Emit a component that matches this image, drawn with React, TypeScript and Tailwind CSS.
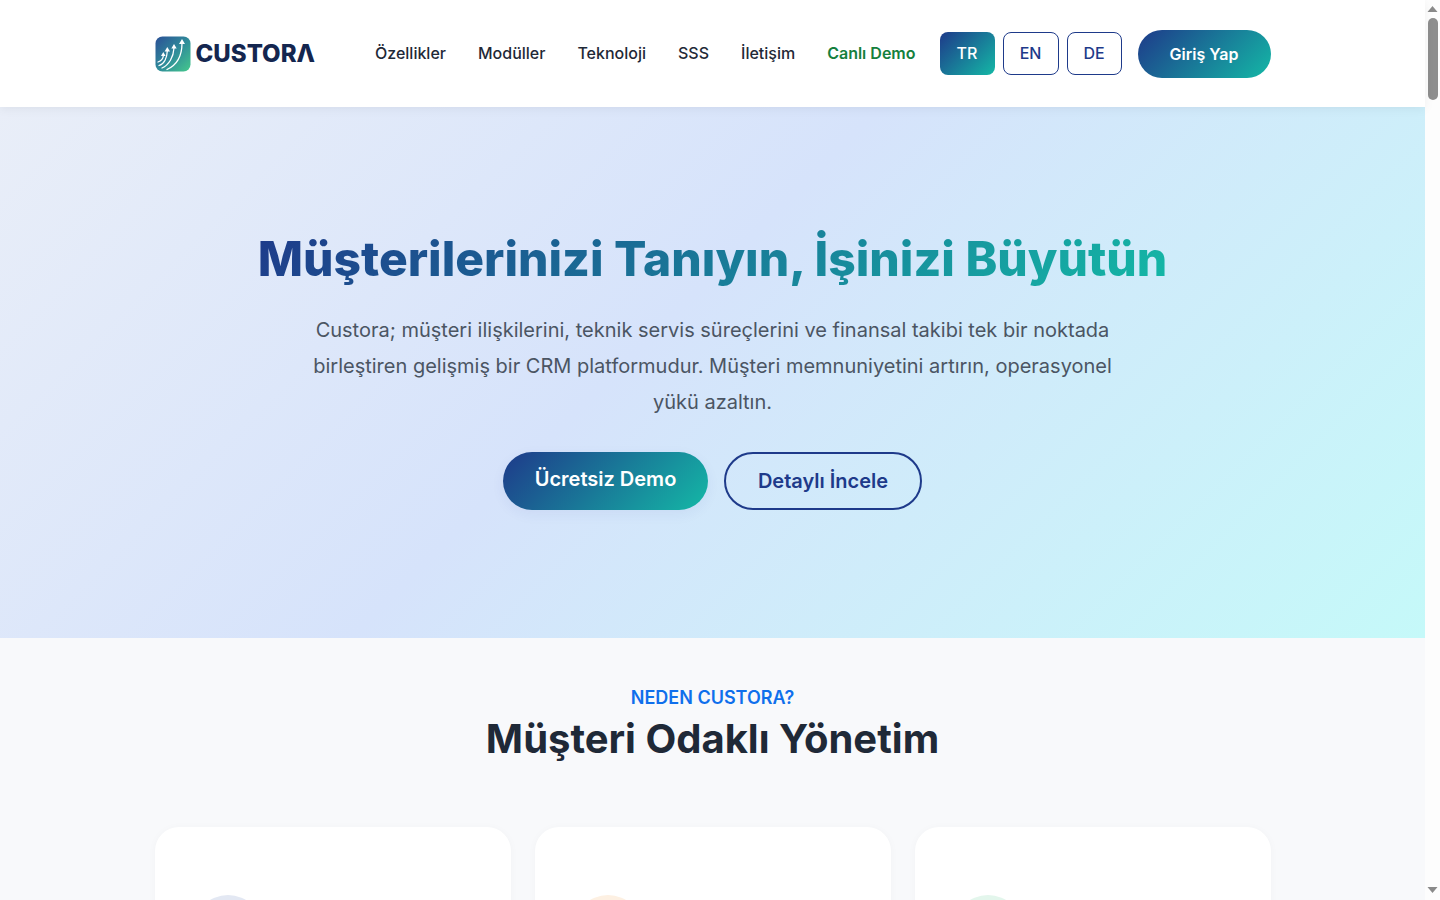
const navLinks = ["Özellikler", "Modüller", "Teknoloji", "SSS", "İletişim"];

const Logo = () => (
  <div className="flex items-center gap-[5px]">
    <svg width="36" height="36" viewBox="0 0 36 36" fill="none">
      <defs>
        <linearGradient id="logoBg" x1="0" y1="0" x2="1" y2="1">
          <stop offset="0" stopColor="#2b4f96" />
          <stop offset="0.5" stopColor="#2f8a9a" />
          <stop offset="1" stopColor="#45c98c" />
        </linearGradient>
      </defs>
      <rect x="0.5" y="0.5" width="35" height="35" rx="7" fill="url(#logoBg)" />
      <g stroke="#fff" strokeWidth="1.3" strokeLinecap="round" fill="none">
        <path d="M3 26C6 25 8 23 8.300 20" />
        <path d="M4 29.500C9 28 12 22 12.300 15" />
        <path d="M7 32C14 29 18.500 21 19 12" />
        <path d="M12 33.500C22 29 27 19 27 7" />
      </g>
      <g fill="#fff">
        <path d="M27 3L30 8H24Z" />
        <path d="M19 8L21.700 12.500H16.300Z" />
        <path d="M12.300 11L15 15.500H9.600Z" />
        <path d="M8.300 16L10.600 20H6Z" />
      </g>
    </svg>
    <span className="text-[24px] leading-none font-extrabold text-[#14264f]">CUSTORΛ</span>
  </div>
);

const Navbar = () => (
  <nav className="relative z-10 bg-white h-[107px] shrink-0 shadow-[0_2px_10px_rgba(0,0,0,0.06)]">
    <div className="w-[1116px] mx-auto h-full flex items-center justify-between">
      <Logo />
      <div className="flex items-center">
        <div className="flex items-center gap-8 mb-[2px] text-base font-medium text-[#1f2937]">
          {navLinks.map((link) => (
            <a key={link} href="#">
              {link}
            </a>
          ))}
          <a href="#" className="font-semibold text-[#15803d]">
            Canlı Demo
          </a>
        </div>
        <div className="flex items-center gap-2 ml-6">
          <button className="w-[55px] h-[43px] pb-[2px] rounded-lg text-base font-medium text-white bg-linear-[135deg] from-[#1e3a8a] to-[#14b8a6]">
            TR
          </button>
          <button className="w-[56px] h-[43px] pb-[2px] rounded-lg text-base font-medium text-[#1e3a8a] bg-white border border-[#1e3a8a]">
            EN
          </button>
          <button className="w-[55px] h-[43px] pb-[2px] rounded-lg text-base font-medium text-[#1e3a8a] bg-white border border-[#1e3a8a]">
            DE
          </button>
        </div>
        <button className="ml-4 w-[133px] h-[48px] rounded-full text-base font-semibold text-white bg-linear-[135deg] from-[#1e3a8a] to-[#14b8a6]">
          Giriş Yap
        </button>
      </div>
    </div>
  </nav>
);

const Hero = () => (
  <section className="h-[531px] shrink-0 bg-linear-[135deg] from-[#e9eef8] via-[#d6e3fb] via-45% to-[#c5f9f9] flex flex-col items-center pt-[121px]">
    <h1 className="text-5xl leading-[62px] font-extrabold bg-linear-[135deg] from-[#1e3a8a] to-[#14b8a6] bg-clip-text text-transparent">
      Müşterilerinizi Tanıyın, İşinizi Büyütün
    </h1>
    <p className="mt-[22px] w-[816px] text-center text-xl leading-9 text-[#4b5563]">
      Custora; müşteri ilişkilerini, teknik servis süreçlerini ve finansal takibi tek bir noktada
      birleştiren gelişmiş bir CRM platformudur. Müşteri memnuniyetini artırın, operasyonel yükü azaltın.
    </p>
    <div className="mt-[32px] flex items-center gap-4">
      <button className="w-[205px] h-[58px] pb-[4px] rounded-full text-xl font-semibold text-white bg-linear-[135deg] from-[#1e3a8a] to-[#14b8a6] shadow-[0_4px_14px_rgba(30,58,138,0.06)]">
        Ücretsiz Demo
      </button>
      <button className="w-[198px] h-[58px] rounded-full text-xl font-semibold text-[#1e3a8a] border-2 border-[#1e3a8a]">
        Detaylı İncele
      </button>
    </div>
  </section>
);

const cards = [
  { id: "crm", dot: "bg-[#e3e8f3]" },
  { id: "service", dot: "bg-[#fdf0e2]" },
  { id: "finance", dot: "bg-[#e3f6ec]" },
];

const Features = () => (
  <section className="grow bg-[#f8f9fb] pt-[48px]">
    <div className="text-center text-lg leading-[20px] font-semibold text-[#0f6fec] mt-[2px]">NEDEN CUSTORA?</div>
    <h2 className="text-center text-[40px] leading-[48px] font-bold text-[#1f2937] mt-[7px]">
      Müşteri Odaklı Yönetim
    </h2>
    <div className="w-[1116px] mx-auto mt-[64px] grid grid-cols-3 gap-6">
      {cards.map((card) => (
        <div
          key={card.id}
          className="h-[320px] rounded-3xl bg-white px-[38px] pt-[68px] shadow-[0_1px_8px_rgba(15,23,42,0.03)]"
        >
          <div className={`w-[70px] h-[70px] rounded-full ${card.dot}`} />
        </div>
      ))}
    </div>
  </section>
);

// the browser's own scrollbar does not show in the photo, so it is drawn
const Scrollbar = () => (
  <aside className="w-[15px] shrink-0 bg-[#fdfdfd] flex flex-col items-center">
    <svg width="11" height="6" viewBox="0 0 11 6" className="mt-[6px]">
      <path d="M5.500 0L10.500 6H0.500Z" fill="#8a8a8a" />
    </svg>
    <div className="w-[10px] h-[82px] mt-[6px] rounded-full bg-[#8e8e8e]" />
    <div className="grow" />
    <svg width="11" height="6" viewBox="0 0 11 6" className="mb-[7px]">
      <path d="M0.500 0H10.500L5.500 6Z" fill="#8a8a8a" />
    </svg>
  </aside>
);

const App = () => (
  <div className="flex h-screen overflow-hidden font-['Inter',sans-serif]">
    <main className="flex-1 min-w-0 flex flex-col">
      <Navbar />
      <Hero />
      <Features />
    </main>
    <Scrollbar />
  </div>
);

export default App;
